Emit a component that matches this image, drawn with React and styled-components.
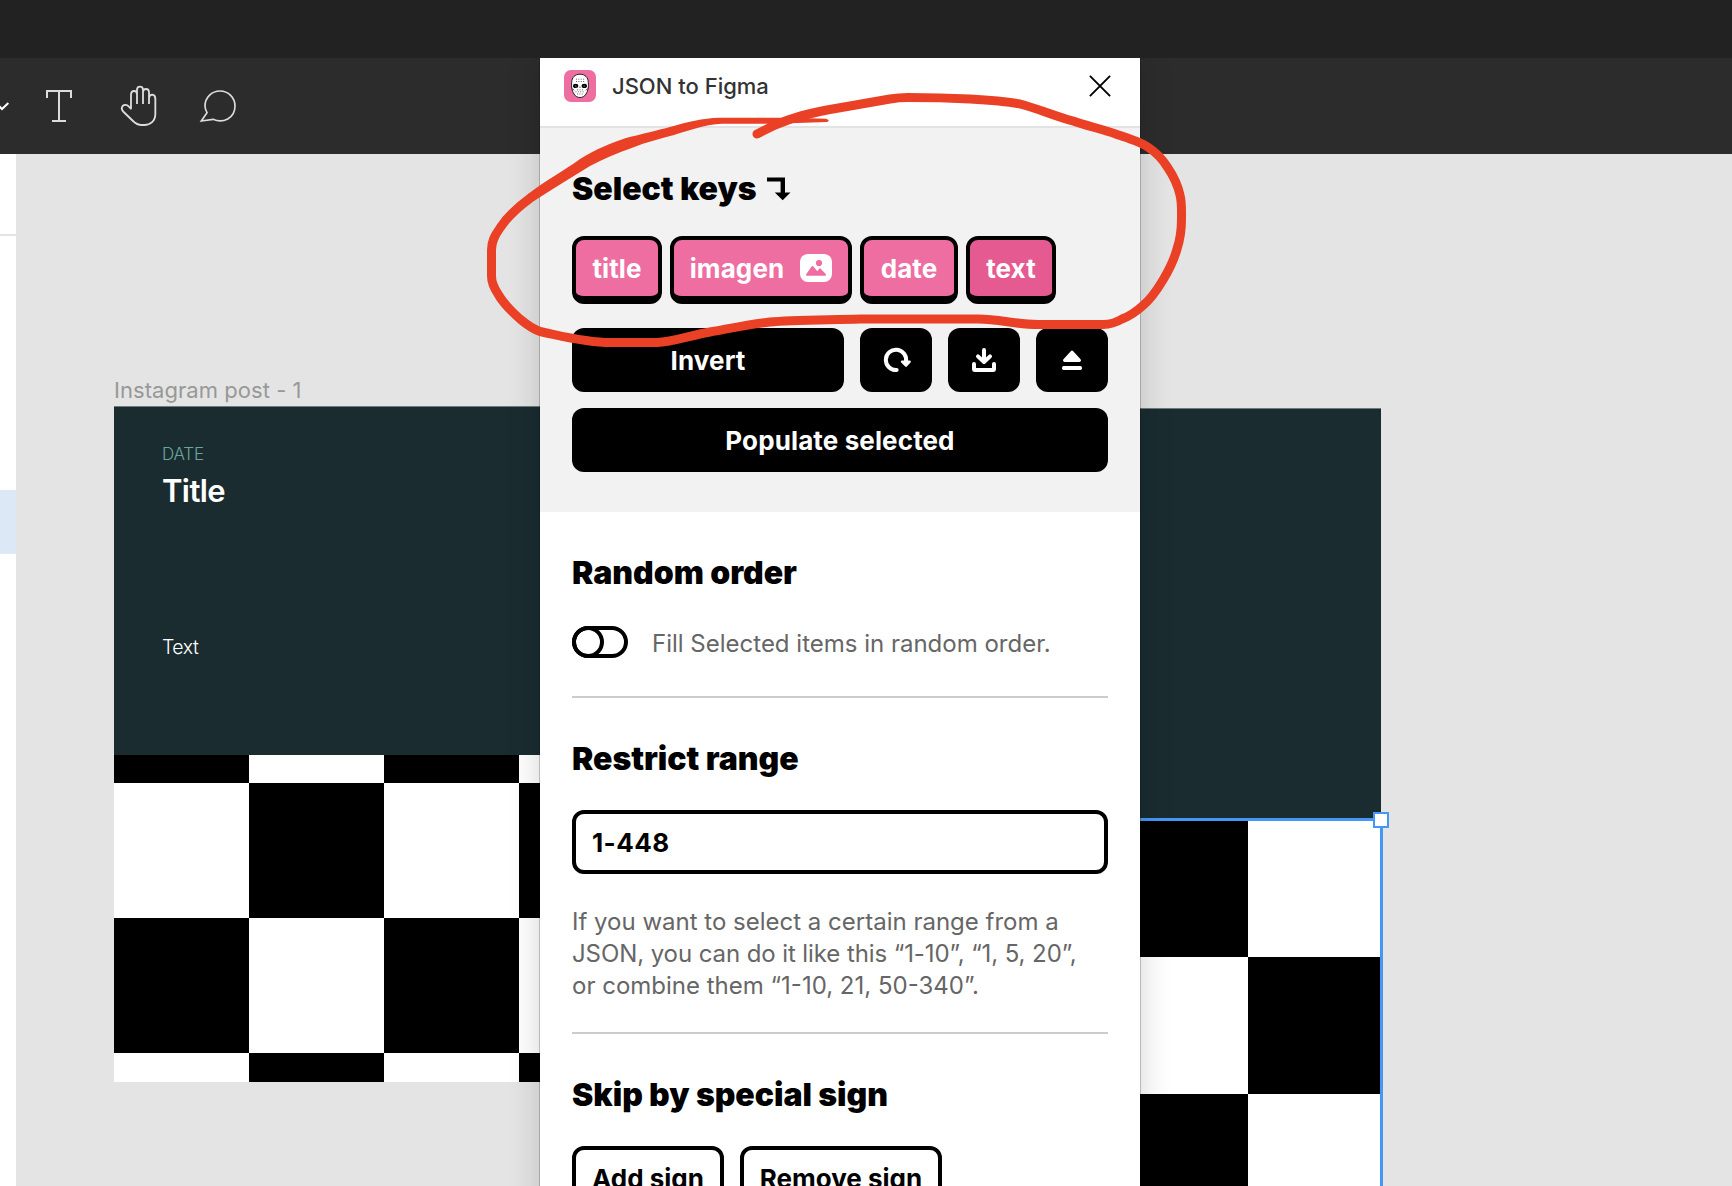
import React from "react";
import styled, { createGlobalStyle } from "styled-components";

const GlobalStyle = createGlobalStyle`
  * { box-sizing: border-box; }
  html, body { margin: 0; padding: 0; }
  body { font-family: Inter, "Liberation Sans", sans-serif; overflow: hidden; }
  button, input { font-family: inherit; margin: 0; }
  svg { display: block; flex: none; }
`;

const pink = "#ee6ea2";

const Screen = styled.div`
  position: relative;
  display: flex;
  flex-direction: column;
  width: 1732px;
  height: 1186px;
  overflow: hidden;
  background: #e4e4e4;
`;

const TopBar = styled.div`
  flex: none;
  height: 58px;
  background: #222222;
`;

const Toolbar = styled.div`
  flex: none;
  display: flex;
  align-items: center;
  height: 96px;
  background: #2c2c2c;
`;

const Tool = styled.div`
  display: flex;
  align-items: center;
  justify-content: ${(p) => (p.$edge ? "flex-start" : "center")};
  width: ${(p) => (p.$edge ? 18 : 80)}px;
  height: 96px;
`;

const Workspace = styled.div`
  flex: 1;
  display: flex;
  min-height: 0;
`;

const Sidebar = styled.div`
  flex: none;
  display: flex;
  flex-direction: column;
  width: 16px;
  background: #ffffff;
`;

const SidebarHead = styled.div`
  height: 82px;
  border-bottom: 2px solid #e4e4e4;
`;

const SelectedLayer = styled.div`
  height: 64px;
  margin-top: 254px;
  background: #dce8f5;
`;

const Canvas = styled.div`
  position: relative;
  flex: 1;
  overflow: hidden;
  background: #e4e4e4;
`;

/* Artboards sit freely on the canvas. */
const Artboard = styled.div`
  position: absolute;
  left: ${(p) => p.$x}px;
  top: ${(p) => p.$y}px;
  width: ${(p) => p.$w}px;
  height: ${(p) => p.$h}px;
  display: flex;
  flex-direction: column;
`;

const ArtboardName = styled.div`
  position: absolute;
  left: 98px;
  top: 222px;
  color: #989898;
  font-size: 22px;
  line-height: 28px;
  letter-spacing: 0.05px;
  white-space: nowrap;
`;

const PostCard = styled.div`
  flex: none;
  display: flex;
  flex-direction: column;
  height: ${(p) => p.$h}px;
  padding: 37px 48px;
  background: #1a2c30;
  color: #ffffff;
  box-shadow: inset 0 1px #6f7a7c;
`;

const PostDate = styled.div`
  color: #68a79d;
  font-size: 17px;
  font-weight: 300;
  line-height: 22px;
  letter-spacing: -0.2px;
`;

const PostTitle = styled.div`
  margin-top: 6px;
  font-size: 31px;
  font-weight: 600;
  line-height: 40px;
  letter-spacing: -0.6px;
`;

const PostText = styled.div`
  margin-top: 123px;
  font-size: 19.5px;
  font-weight: 300;
  line-height: 26px;
  letter-spacing: -0.5px;
`;

const Checker = styled.div`
  flex: 1;
  background-color: #ffffff;
  background-image: conic-gradient(
    #000 0 25%, #fff 0 50%, #000 0 75%, #fff 0
  );
  background-size: ${(p) => p.$tile}px ${(p) => p.$tile}px;
  background-position: ${(p) => p.$pos};
`;

const SelectionBox = styled.div`
  position: absolute;
  left: 700px;
  top: 664px;
  width: 667px;
  height: 700px;
  border: 3px solid #4597f7;
`;

const SelectionHandle = styled.div`
  position: absolute;
  right: -9px;
  top: -9px;
  width: 16px;
  height: 16px;
  border: 2px solid #4597f7;
  background: #ffffff;
`;

const PluginWindow = styled.div`
  position: absolute;
  left: 540px;
  top: 58px;
  width: 600px;
  height: 1160px;
  display: flex;
  flex-direction: column;
  background: #ffffff;
  box-shadow: 0 0 0 1px rgba(0, 0, 0, 0.2), 0 4px 32px rgba(0, 0, 0, 0.17);
  clip-path: inset(0 -50px);
`;

const WindowHeader = styled.div`
  flex: none;
  display: flex;
  align-items: center;
  height: 70px;
  padding: 0 28px 12px 24px;
  border-bottom: 2px solid #e3e3e3;
`;

const PluginLogo = styled.div`
  display: flex;
  align-items: center;
  justify-content: center;
  width: 32px;
  height: 32px;
  border-radius: 7px;
  background: ${pink};
`;

const WindowTitle = styled.div`
  flex: 1;
  margin-left: 16px;
  color: #333333;
  font-size: 22px;
  font-weight: 550;
  line-height: 32px;
`;

const KeysSection = styled.section`
  flex: none;
  height: 384px;
  padding: 41px 32px 0;
  background: #f2f2f2;
`;

const Section = styled.section`
  flex: none;
  display: flex;
  flex-direction: column;
  height: ${(p) => p.$h}px;
  margin: 0 32px;
  padding-top: 41px;
  border-bottom: 2px solid #cccccc;
`;

const Heading = styled.h2`
  display: flex;
  align-items: center;
  gap: 10px;
  margin: 0;
  color: #000000;
  font-size: 32px;
  font-weight: 900;
  line-height: 40px;
  letter-spacing: -0.02px;
  white-space: nowrap;
`;

const KeyRow = styled.div`
  display: flex;
  gap: 8px;
  margin-top: 27px;
`;

const KeyButton = styled.button`
  display: flex;
  align-items: center;
  justify-content: center;
  gap: 16px;
  width: ${(p) => p.$w}px;
  height: 68px;
  padding: 0;
  border: 4px solid #000000;
  border-bottom-width: 8px;
  border-radius: 12px;
  background: ${(p) => (p.$active ? "#e65a92" : pink)};
  color: #ffffff;
  font-size: 26px;
  font-weight: 700;
  line-height: 32px;
`;

const KeyLabel = styled.span`
  padding-top: 1px;
  letter-spacing: 0.1px;
`;

const ActionRow = styled.div`
  display: flex;
  gap: 16px;
  margin-top: ${(p) => p.$mt}px;
`;

const ActionButton = styled.button`
  display: flex;
  align-items: center;
  justify-content: center;
  flex: ${(p) => (p.$icon ? "none" : 1)};
  width: ${(p) => (p.$icon ? "72px" : "auto")};
  height: 64px;
  padding: ${(p) => (p.$icon ? 0 : "2px 0 0")};
  border: 0;
  border-radius: 12px;
  background: #000000;
  color: #ffffff;
  font-size: 26px;
  font-weight: 700;
  line-height: 32px;
  letter-spacing: 0.12px;
`;

const ToggleRow = styled.div`
  display: flex;
  gap: 24px;
  margin-top: 33px;
`;

const Toggle = styled.div`
  width: 56px;
  height: 32px;
  border: 4px solid #000000;
  border-radius: 16px;
  background: #ffffff;
`;

const ToggleKnob = styled.div`
  width: 32px;
  height: 32px;
  margin: -4px 0 0 -4px;
  border: 4px solid #000000;
  border-radius: 50%;
`;

const Description = styled.p`
  margin: ${(p) => p.$mt || 0}px 0 0;
  color: #666666;
  font-size: 24px;
  line-height: 32px;
  white-space: nowrap;
`;

const TightLine = styled.span`
  letter-spacing: -0.09px;
`;

const RangeInput = styled.input`
  width: 536px;
  height: 64px;
  margin-top: 31px;
  padding: 0 16px;
  border: 4px solid #000000;
  border-radius: 12px;
  background: #ffffff;
  color: #000000;
  font-size: 26px;
  font-weight: 700;
  letter-spacing: 0.4px;
  outline: none;
`;

const OutlineButton = styled.button`
  display: flex;
  align-items: center;
  justify-content: center;
  width: ${(p) => p.$w}px;
  height: 64px;
  padding: 2px 0 0;
  border: 4px solid #000000;
  border-radius: 12px;
  background: #ffffff;
  color: #000000;
  font-size: 26px;
  font-weight: 700;
  line-height: 32px;
  white-space: nowrap;
`;

const Annotation = styled.svg`
  position: absolute;
  left: 0;
  top: 0;
  pointer-events: none;
`;

const toolStroke = { fill: "none", stroke: "#dcdcdc", strokeWidth: 6 };

const ChevronIcon = () => (
  <svg width="10" height="12" viewBox="0 183 30 36" fill="none" stroke="#fff" strokeWidth="6">
    <path d="M-12 192L6 210L25 192" />
  </svg>
);

const TypeIcon = () => (
  <svg width="40" height="32" viewBox="114 150 120 96" {...toolStroke}>
    <path d="M141 174V153H213V174M177 153V243M156 243H198" />
  </svg>
);

const HandIcon = () => (
  <svg width="40" height="44" viewBox="354 132 120 132" {...toolStroke} strokeWidth="5.5">
    <path d="M393 208V165Q393 153 402 153Q411 153 411 163M411 192V150Q411 140 420 140Q429 140 429 150V192M429 155Q430 147 438 147Q447 147 447 157V192M447 174Q448 164 457 164Q466 165 466 176V222C466 243 451 255 433 255H425C414 255 407 251 399 243L371 216C365 210 364 203 368 198C373 193 381 194 386 199L394 207" />
  </svg>
);

const CommentIcon = () => (
  <svg width="40" height="36" viewBox="594 144 120 108" {...toolStroke} strokeWidth="5">
    <path d="M604 243L639 238C669 251 705 235 705 198C705 173 685 153 660 153C635 153 615 173 615 198C615 206 617 211 621 218Z" />
  </svg>
);

const MaskIcon = () => (
  <svg width="20" height="26" viewBox="0 0 20 26">
    <path d="M10 1.2C15 1.2 18.3 4.4 18.3 9.5C18.9 14 18 18.3 16 21C14.4 23.5 12.4 24.5 10 24.5S5.6 23.5 4 21C2 18.3 1.1 14 1.7 9.5C1.7 4.4 5 1.2 10 1.2Z" fill="#fff" stroke="#222" strokeWidth="1" />
    <ellipse cx="5.7" cy="12.9" rx="2.7" ry="2.1" fill="#000" />
    <ellipse cx="14.3" cy="12.9" rx="2.7" ry="2.1" fill="#000" />
    <circle cx="5.9" cy="12.9" r=".5" fill="#fff" />
    <circle cx="14.1" cy="12.9" r=".5" fill="#fff" />
    <g stroke="#444" strokeWidth=".9" strokeDasharray=".9 1.5">
      <path d="M6 6.2H14.5M6 8.5H14.5M7.2 16.8H13.5M5.5 18.8H15M7 21H13.5" />
    </g>
    <path d="M2 15.5L4.3 17.3M18 15.5L15.7 17.3M10 13.5V15" stroke="#333" strokeWidth=".8" />
  </svg>
);

const CloseIcon = () => (
  <svg width="24" height="24" viewBox="0 0 24 24" stroke="#000" strokeWidth="1.9">
    <path d="M1.9 1.9L22.1 22.1M22.1 1.9L1.9 22.1" />
  </svg>
);

const DownArrowIcon = () => (
  <svg width="24" height="24" viewBox="0 0 24 24">
    <path d="M0 .4H18V15.5H23.5L15.7 23.3L7.8 15.5H13.6V4.5H0Z" />
  </svg>
);

const ImageIcon = () => (
  <svg width="32" height="28" viewBox="0 0 32 28">
    <rect width="32" height="28" rx="8" fill="#fff" />
    <circle cx="19" cy="9" r="3.1" fill={pink} />
    <path d="M7 20.8L12.4 13L17.4 18.8L20 15.4L25 20.8Z" fill={pink} stroke={pink} strokeWidth="2" strokeLinejoin="round" />
  </svg>
);

const RefreshIcon = () => (
  <svg width="32" height="32" viewBox="120 372 96 96">
    <path d="M170 450A30.5 30.5 0 1 1 198 425" fill="none" stroke="#fff" strokeWidth="12" strokeLinecap="round" />
    <path d="M186 425H209L198 437Z" fill="#fff" stroke="#fff" strokeWidth="7" strokeLinejoin="round" />
  </svg>
);

const DownloadIcon = () => (
  <svg width="32" height="32" viewBox="384 372 96 96" fill="none" stroke="#fff" strokeWidth="12" strokeLinecap="round" strokeLinejoin="round">
    <path d="M432 390V424M414 409L432 426L450 409M402 432V447Q402 450 405 450H459Q462 450 462 447V432" />
  </svg>
);

const EjectIcon = () => (
  <svg width="32" height="32" viewBox="648 372 96 96" fill="#fff">
    <path d="M674 421L696 397L718 421Z" stroke="#fff" strokeWidth="10" strokeLinejoin="round" />
    <rect x="666" y="438" width="60" height="12" rx="5" />
  </svg>
);

export default function App() {
  return (
    <>
      <GlobalStyle />
      <Screen>
        <TopBar />
        <Toolbar>
          <Tool $edge>
            <ChevronIcon />
          </Tool>
          <Tool>
            <TypeIcon />
          </Tool>
          <Tool>
            <HandIcon />
          </Tool>
          <Tool>
            <CommentIcon />
          </Tool>
        </Toolbar>
        <Workspace>
          <Sidebar>
            <SidebarHead />
            <SelectedLayer />
          </Sidebar>
          <Canvas>
            <ArtboardName>Instagram post - 1</ArtboardName>
            <Artboard $x={98} $y={252} $w={675} $h={676}>
              <PostCard $h={349}>
                <PostDate>DATE</PostDate>
                <PostTitle>Title</PostTitle>
                <PostText>Text</PostText>
              </PostCard>
              <Checker $tile={270} $pos="0 28px" />
            </Artboard>
            <Artboard $x={690} $y={254} $w={675} $h={800}>
              <PostCard $h={412} />
              <Checker $tile={274} $pos="268px 0" />
            </Artboard>
            <SelectionBox>
              <SelectionHandle />
            </SelectionBox>
          </Canvas>
        </Workspace>

        <PluginWindow>
          <WindowHeader>
            <PluginLogo>
              <MaskIcon />
            </PluginLogo>
            <WindowTitle>JSON to Figma</WindowTitle>
            <CloseIcon />
          </WindowHeader>
          <KeysSection>
            <Heading>
              Select keys
              <DownArrowIcon />
            </Heading>
            <KeyRow>
              <KeyButton $w={90}>
                <KeyLabel>title</KeyLabel>
              </KeyButton>
              <KeyButton $w={182}>
                <KeyLabel>imagen</KeyLabel>
                <ImageIcon />
              </KeyButton>
              <KeyButton $w={98}>
                <KeyLabel>date</KeyLabel>
              </KeyButton>
              <KeyButton $w={90} $active>
                <KeyLabel>text</KeyLabel>
              </KeyButton>
            </KeyRow>
            <ActionRow $mt={24}>
              <ActionButton>Invert</ActionButton>
              <ActionButton $icon>
                <RefreshIcon />
              </ActionButton>
              <ActionButton $icon>
                <DownloadIcon />
              </ActionButton>
              <ActionButton $icon>
                <EjectIcon />
              </ActionButton>
            </ActionRow>
            <ActionRow $mt={16}>
              <ActionButton>Populate selected</ActionButton>
            </ActionRow>
          </KeysSection>
          <Section $h={186}>
            <Heading>Random order</Heading>
            <ToggleRow>
              <Toggle>
                <ToggleKnob />
              </Toggle>
              <Description $mt={2}>Fill Selected items in random order.</Description>
            </ToggleRow>
          </Section>
          <Section $h={336}>
            <Heading>Restrict range</Heading>
            <RangeInput defaultValue="1-448" />
            <Description $mt={32}>
              If you want to select a certain range from a
              <br />
              <TightLine>JSON, you can do it like this “1-10”, “1, 5, 20”,</TightLine>
              <br />
              or combine them “1-10, 21, 50-340”.
            </Description>
          </Section>
          <Section $h={260}>
            <Heading>Skip by special sign</Heading>
            <ActionRow $mt={31}>
              <OutlineButton $w={152}>Add sign</OutlineButton>
              <OutlineButton $w={202}>Remove sign</OutlineButton>
            </ActionRow>
          </Section>
        </PluginWindow>

        <Annotation width="1732" height="400" viewBox="0 0 1732 400">
          <path
            d="M757 134C767 129 774 125 783 122C797 116 812 113 827 110L890 99C896 98 899 97.5 908 97.5C934 97.5 950 98 970 99C989 100 1005 101 1020 104C1036 108 1052 115 1073 121C1087 126 1102 129 1117 134.500C1128 138 1140 142 1147 146.500C1156 152 1163 160 1168 168C1174 177 1178 186 1180 195C1182 203 1181.500 211 1181.500 219C1181.500 229 1180 240 1177 249C1174 260 1169 270 1163 280C1157 290 1151 299 1143 305.500C1137 311 1130 316 1122 319C1117 322 1110 324.500 1103 324.500H1038C1015 324.500 1000 319 978 319H860C825 320 790 320 770 322C750 324 732 328 710 332C692 335 672 342 657 342.500H610C586 342.500 562 336 540 331.500C533 329 526 324 520 319C511 311 503 303 498 294C494 288 491.500 283 491.500 276V250C491.500 241 495 235 500 228C507 217 518 207 531 197.500"
            fill="none"
            stroke="#ea4025"
            strokeWidth="9"
            strokeLinecap="round"
            strokeLinejoin="round"
          />
          <path
            d="M528 194C545 181 565 170 580 159C596 149 611 143 626 138C642 134 655 131 670 127C687 122 703 118 719 117.700H790L826 118.700Q831 120.500 827 122L775 123.800H722C706 124.500 690 130 674 135C660 139 646 142 633 147.500C617 153 603 159 590 166C571 178 552 189 534 201Z"
            fill="#ea4025"
          />
        </Annotation>
      </Screen>
    </>
  );
}
